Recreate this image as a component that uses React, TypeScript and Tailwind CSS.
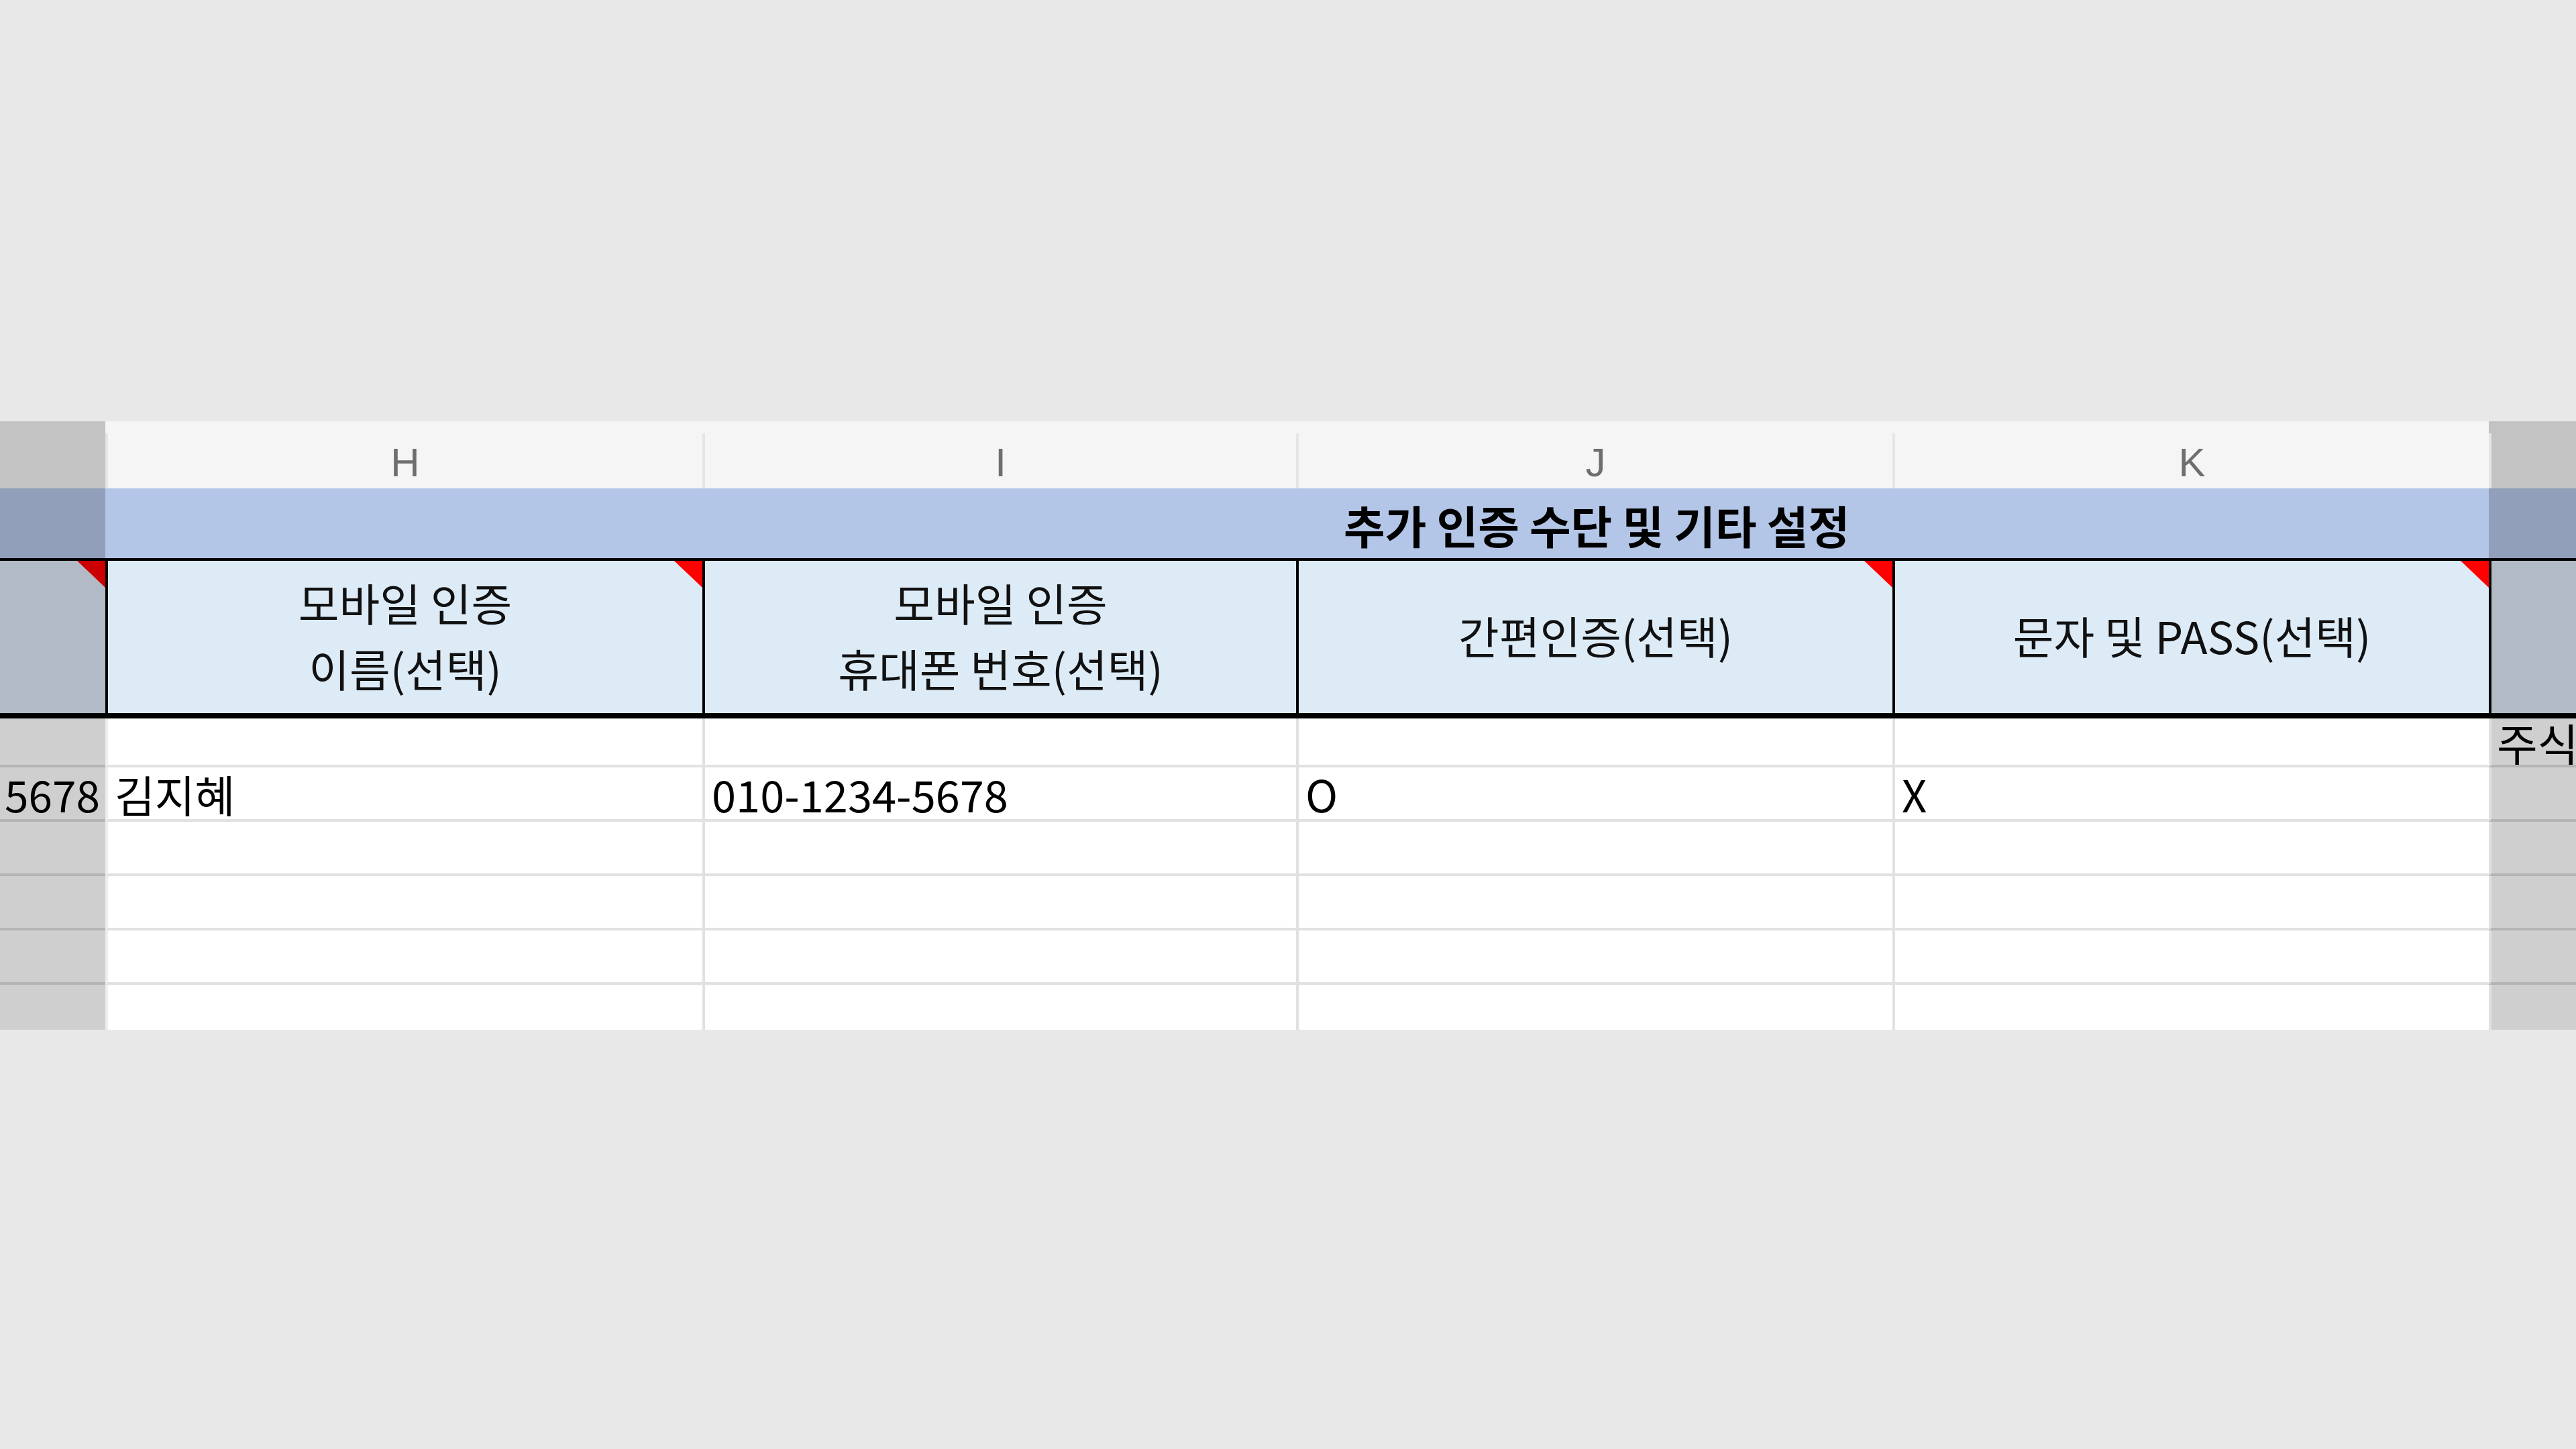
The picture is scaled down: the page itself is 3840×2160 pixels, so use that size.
const KR = "font-['Noto_Sans_CJK_KR','Noto_Sans',sans-serif]";
const COLS = 'grid grid-cols-[157px_890px_885px_889px_889px_130px]';

function Flag({ dark }: { dark?: boolean }) {
  return (
    <div
      className={`absolute right-0 top-0 h-[40px] w-[42px] [clip-path:polygon(0_0,100%_0,100%_100%)] ${
        dark ? 'bg-[#cc0000]' : 'bg-[#ff0000]'
      }`}
    />
  );
}

const headers = [
  { lines: ['모바일 인증', '이름(선택)'], flag: true },
  { lines: ['모바일 인증', '휴대폰 번호(선택)'], flag: false },
  { lines: ['간편인증(선택)'], flag: true },
  { lines: ['문자 및 PASS(선택)'], flag: true },
];

// heights include the 4px bottom gridline (border-box)
const rows = [
  { h: 'h-[73px]', head: '', cells: ['', '', '', ''], side: '주식회사' },
  { h: 'h-[81px]', head: '5678', cells: ['김지혜', '010-1234-5678', 'O', 'X'], side: '' },
  { h: 'h-[81px]', head: '', cells: ['', '', '', ''], side: '' },
  { h: 'h-[81px]', head: '', cells: ['', '', '', ''], side: '' },
  { h: 'h-[81px]', head: '', cells: ['', '', '', ''], side: '' },
  { h: 'h-[67px]', head: '', cells: ['', '', '', ''], side: '' },
];

export default function App() {
  return (
    <div className={`h-[2160px] w-[3840px] overflow-hidden bg-[#e8e8e8] pt-[628px] text-black ${KR}`}>
      {/* column letters */}
      <div className={`${COLS} h-[100px]`}>
        <div className="bg-[#c3c3c3]" />
        {['H', 'I', 'J', 'K'].map((l) => (
          <div key={l} className="flex bg-[#f5f5f5]">
            <div className="mt-[18px] w-[4px] bg-[#e5e5e5]" />
            <div className="flex flex-1 items-end justify-center pb-[8px] font-['Liberation_Sans',sans-serif] text-[60px] leading-none text-[#6e6e6e]">
              {l}
            </div>
          </div>
        ))}
        <div className="flex bg-[#c3c3c3]">
          <div className="mt-[18px] w-[4px] bg-[#e5e5e5]" />
        </div>
      </div>

      {/* section band */}
      <div className={`${COLS} h-[104px]`}>
        <div className="bg-[#919fba]" />
        <div className="col-span-4 flex items-center bg-[#b4c6e7] pl-[1846px] pt-[4px] text-[67px] font-bold leading-[80px] whitespace-nowrap">
          추가 인증 수단 및 기타 설정
        </div>
        <div className="bg-[#919fba]" />
      </div>

      <div className="h-[4px] bg-black" />

      {/* header cells */}
      <div className={`${COLS} h-[227px]`}>
        <div className="relative bg-[#b2bbc5]">
          <Flag dark />
        </div>
        {headers.map((h, i) => (
          <div
            key={i}
            className="relative flex flex-col items-center justify-center border-l-4 border-black bg-[#ddebf7] pb-[8px] text-[66px] leading-[98px] text-[#111]"
          >
            {h.lines.map((l) => (
              <span key={l} className="whitespace-nowrap">
                {l}
              </span>
            ))}
            {h.flag && <Flag />}
          </div>
        ))}
        <div className="border-l-4 border-black bg-[#b2bbc5]" />
      </div>

      <div className="h-[8px] bg-black" />

      {/* data rows */}
      {rows.map((r, ri) => {
        const last = ri === rows.length - 1;
        return (
          <div key={ri} className={`${COLS} ${r.h}`}>
            <div
              className={`flex items-center justify-end bg-[#cfcfcf] pr-[8px] text-[64px] leading-[72px] ${
                last ? '' : 'border-b-4 border-[#b4b4b4]'
              }`}
            >
              {r.head}
            </div>
            {r.cells.map((c, ci) => (
              <div
                key={ci}
                className={`flex items-center whitespace-nowrap border-l-4 bg-white pl-[10px] text-[65px] leading-[72px] ${
                  ci === 0 ? 'border-l-[#eeeeee]' : 'border-l-[#e1e1e1]'
                } ${last ? '' : 'border-b-4 border-b-[#e1e1e1]'}`}
              >
                {c}
              </div>
            ))}
            <div
              className={`flex items-start overflow-hidden whitespace-nowrap border-l-4 border-l-[#e1e1e1] bg-[#cfcfcf] pl-[8px] text-[66px] leading-[70px] ${
                last ? '' : 'border-b-4 border-b-[#b4b4b4]'
              }`}
            >
              {r.side}
            </div>
          </div>
        );
      })}
    </div>
  );
}
